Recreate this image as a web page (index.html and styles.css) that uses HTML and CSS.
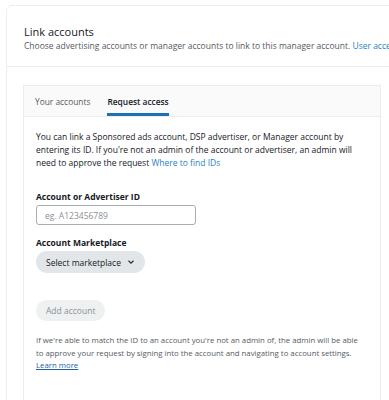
FILE: index.html
```html
<!DOCTYPE html>
<html lang="en">
<head>
    <meta charset="UTF-8">
    <meta name="viewport" content="width=device-width, initial-scale=1.0">
    <title>Link accounts</title>
    <link rel="stylesheet" href="styles.css">
</head>
<body>
    <div class="card">
        <div class="card-header">
            <h1>Link accounts</h1>
            <p class="subtitle">Choose advertising accounts or manager accounts to link to this manager account. <a href="#">User access</a></p>
        </div>
        <div class="card-body">
            <div class="panel">
                <div class="tabs">
                    <span class="tab">Your accounts</span>
                    <span class="tab active">Request access</span>
                </div>
                <div class="panel-body">
                    <p class="intro">You can link a Sponsored ads account, DSP advertiser, or Manager account by entering its ID. If you're not an admin of the account or advertiser, an admin will need to approve the request <a href="#">Where to find IDs</a></p>

                    <label>Account or Advertiser ID</label>
                    <input type="text" placeholder="eg. A123456789">

                    <label>Account Marketplace</label>
                    <button class="select-btn">Select marketplace
                        <svg width="8" height="6" viewBox="0 0 8 6"><path d="M1.5 1.8 L4 4.2 L6.5 1.8" fill="none" stroke="#232f3e" stroke-width="1.2"/></svg>
                    </button>

                    <button class="add-btn" disabled>Add account</button>

                    <p class="note">If we're able to match the ID to an account you're not an admin of, the admin will be able to approve your request by signing into the account and navigating to account settings. <a href="#">Learn more</a></p>
                </div>
            </div>
        </div>
    </div>
</body>
</html>
```

FILE: styles.css
```css
html, body {
    overflow: hidden;
}
body {
    font-family: "Open Sans", "Noto Sans", Arial, sans-serif;
    background-color: #ffffff;
    margin: 0;
    padding: 0;
    height: 400px;
    color: #16191f;
}
a {
    color: #2a7fc4;
    text-decoration: none;
}
.card {
    margin: 5px 0 0 6px;
    width: 410px;
    height: 420px;
    border: 1px solid #eceded;
    border-radius: 6px;
    box-sizing: border-box;
}
.card-header {
    padding: 18px 0 0 17px;
    height: 61px;
    box-sizing: border-box;
    border-bottom: 1px solid #eceded;
    white-space: nowrap;
    overflow: hidden;
}
h1 {
    margin: 0;
    font-size: 11px;
    font-weight: 400;
    line-height: 15px;
}
.subtitle {
    margin: 0;
    font-size: 8.5px;
    line-height: 13px;
    color: #555b62;
}
.card-body {
    padding: 18px 0 0 16px;
}
.panel {
    width: 358px;
    height: 320px;
    border: 1px solid #eceded;
    box-sizing: border-box;
}
.tabs {
    display: flex;
    gap: 17px;
    height: 30px;
    padding-left: 11px;
    background-color: #fafafa;
    border-bottom: 1px solid #eceded;
    font-size: 8.4px;
}
.tab {
    display: flex;
    align-items: center;
    color: #555b62;
    border-bottom: 3px solid transparent;
    padding-top: 3px;
}
.tab.active {
    color: #16191f;
    font-weight: 600;
    border-bottom-color: #1f6fb5;
}
.panel-body {
    padding: 13px 12px 11px;
    font-size: 8.5px;
}
.intro {
    margin: 0 0 22px;
    line-height: 13px;
}
label {
    display: block;
    font-weight: 700;
    font-size: 8.5px;
    line-height: 12px;
    margin-bottom: 2px;
}
input {
    display: block;
    width: 160px;
    height: 20px;
    padding: 0 8px;
    margin: 0 0 12px;
    border: 1px solid #a8adb3;
    border-radius: 3px;
    box-sizing: border-box;
    font-family: inherit;
    font-size: 8.5px;
}
input::placeholder {
    color: #8b9096;
}
.select-btn {
    display: flex;
    align-items: center;
    gap: 6px;
    height: 22px;
    padding: 0 10px;
    border: none;
    border-radius: 11px;
    background-color: #e3e6e8;
    font-family: inherit;
    font-size: 8.5px;
    color: #16191f;
    margin-bottom: 27px;
}
.add-btn {
    display: block;
    height: 21px;
    padding: 0 10px;
    border: none;
    border-radius: 11px;
    background-color: #eef0f1;
    font-family: inherit;
    font-size: 8.5px;
    color: #8b9096;
    margin-bottom: 13px;
}
.note {
    margin: 0;
    max-width: 325px;
    font-size: 7.8px;
    line-height: 12.5px;
    color: #555b62;
}
.note a {
    color: #1c5fa8;
    text-decoration: underline;
}
```
